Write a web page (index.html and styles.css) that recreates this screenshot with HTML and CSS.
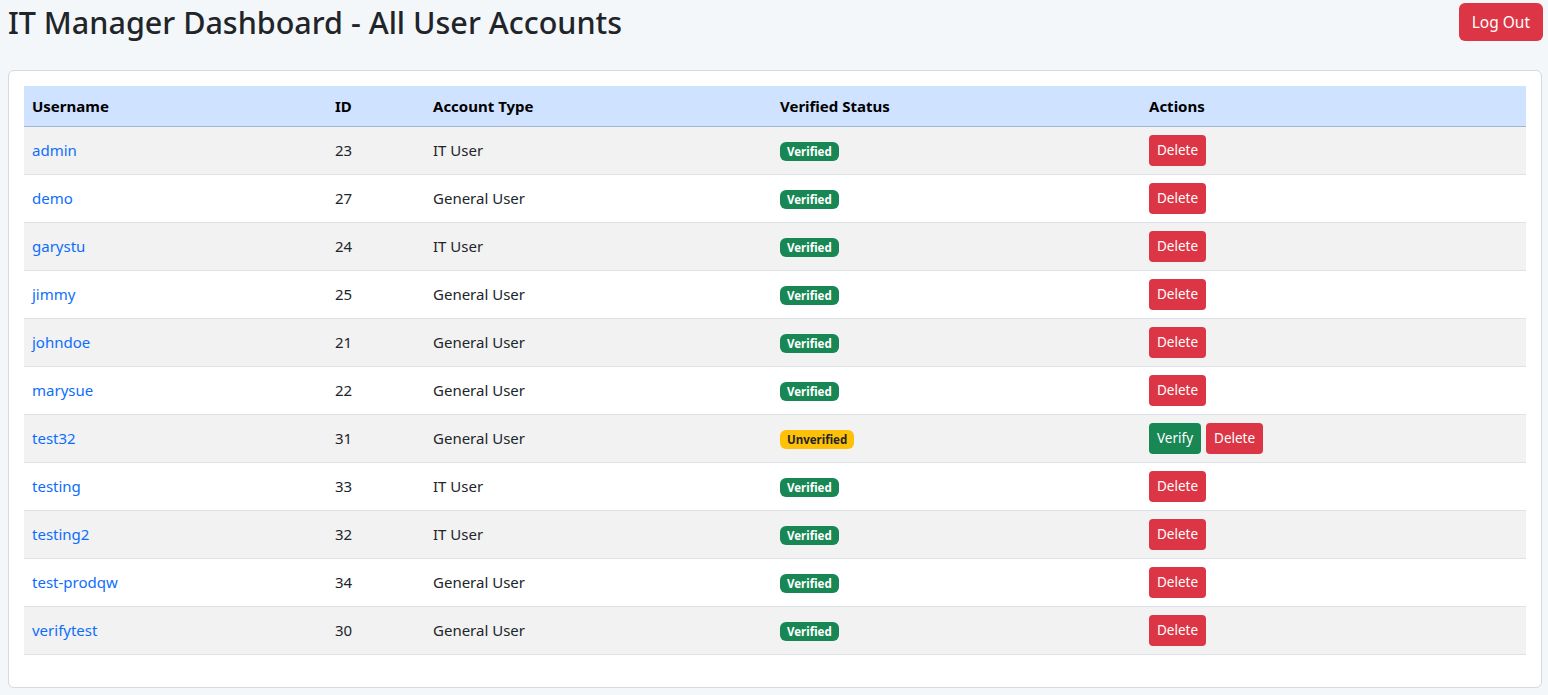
FILE: index.html
```html
<!DOCTYPE html>
<html lang="en">
<head>
<meta charset="utf-8">
<title>IT Manager Dashboard</title>
<link rel="stylesheet" href="styles.css">
</head>
<body>
<header class="topbar">
  <h1 class="title">IT Manager Dashboard - All User Accounts</h1>
  <button class="btn btn-danger btn-md">Log Out</button>
</header>
<main class="card">
  <table class="users">
    <colgroup>
      <col class="c1"><col class="c2"><col class="c3"><col class="c4"><col class="c5">
    </colgroup>
    <thead>
      <tr><th>Username</th><th>ID</th><th>Account Type</th><th>Verified Status</th><th>Actions</th></tr>
    </thead>
    <tbody>
      <tr><td><a href="#">admin</a></td><td>23</td><td>IT User</td><td><span class="badge ok">Verified</span></td><td><button class="btn btn-danger btn-sm">Delete</button></td></tr>
      <tr><td><a href="#">demo</a></td><td>27</td><td>General User</td><td><span class="badge ok">Verified</span></td><td><button class="btn btn-danger btn-sm">Delete</button></td></tr>
      <tr><td><a href="#">garystu</a></td><td>24</td><td>IT User</td><td><span class="badge ok">Verified</span></td><td><button class="btn btn-danger btn-sm">Delete</button></td></tr>
      <tr><td><a href="#">jimmy</a></td><td>25</td><td>General User</td><td><span class="badge ok">Verified</span></td><td><button class="btn btn-danger btn-sm">Delete</button></td></tr>
      <tr><td><a href="#">johndoe</a></td><td>21</td><td>General User</td><td><span class="badge ok">Verified</span></td><td><button class="btn btn-danger btn-sm">Delete</button></td></tr>
      <tr><td><a href="#">marysue</a></td><td>22</td><td>General User</td><td><span class="badge ok">Verified</span></td><td><button class="btn btn-danger btn-sm">Delete</button></td></tr>
      <tr><td><a href="#">test32</a></td><td>31</td><td>General User</td><td><span class="badge warn">Unverified</span></td><td><div class="actions"><button class="btn btn-success btn-sm">Verify</button><button class="btn btn-danger btn-sm">Delete</button></div></td></tr>
      <tr><td><a href="#">testing</a></td><td>33</td><td>IT User</td><td><span class="badge ok">Verified</span></td><td><button class="btn btn-danger btn-sm">Delete</button></td></tr>
      <tr><td><a href="#">testing2</a></td><td>32</td><td>IT User</td><td><span class="badge ok">Verified</span></td><td><button class="btn btn-danger btn-sm">Delete</button></td></tr>
      <tr><td><a href="#">test-prodqw</a></td><td>34</td><td>General User</td><td><span class="badge ok">Verified</span></td><td><button class="btn btn-danger btn-sm">Delete</button></td></tr>
      <tr><td><a href="#">verifytest</a></td><td>30</td><td>General User</td><td><span class="badge ok">Verified</span></td><td><button class="btn btn-danger btn-sm">Delete</button></td></tr>
    </tbody>
  </table>
</main>
</body>
</html>
```
FILE: styles.css
```css
* { box-sizing: border-box; }
html, body { margin: 0; padding: 0; }
body {
  background: #f4f7fa;
  color: #212529;
  font-family: "Noto Sans", "Open Sans", "Liberation Sans", sans-serif;
  font-size: 16px;
  line-height: 1.5;
}
.topbar {
  display: flex;
  justify-content: space-between;
  align-items: center;
  padding: 3px 5px 0 8px;
}
.title {
  margin: 0;
  font-size: 30.5px;
  font-weight: 500;
  line-height: 38px;
}
.btn {
  display: inline-flex;
  align-items: center;
  justify-content: center;
  border: 0;
  border-radius: 6px;
  color: #fff;
  font-family: inherit;
  cursor: pointer;
}
.btn-md {
  height: 38px;
  padding: 0 13px;
  font-size: 15.5px;
}
.btn-danger { background: #dc3545; }
.btn-success { background: #198754; }
.btn-sm {
  height: 31px;
  padding: 0 8px;
  font-size: 13.5px;
  border-radius: 4px;
}
.card {
  margin: 29px 6px 7px 8px;
  background: #fff;
  border: 1px solid #d6d9dd;
  border-radius: 6px;
  padding: 15px 15px 32px 15px;
}
.users {
  width: 100%;
  border-collapse: collapse;
  table-layout: fixed;
}
.c1 { width: 303px; }
.c2 { width: 98px; }
.c3 { width: 347px; }
.c4 { width: 369px; }
.c5 { width: auto; }
.users th {
  background: #cfe2ff;
  text-align: left;
  font-size: 15px;
  font-weight: 700;
  height: 40px;
  padding: 0 8px;
  border-bottom: 1px solid #a6b5cc;
  color: #000;
}
.users td {
  height: 48px;
  padding: 0 8px;
  border-bottom: 1px solid #dee2e6;
  font-size: 15px;
  vertical-align: middle;
}
.users tbody tr:nth-child(odd) td { background: #f2f2f2; }
.users a { color: #0d6efd; text-decoration: none; }
.badge {
  display: inline-block;
  font-size: 11.5px;
  font-weight: 700;
  line-height: 1;
  padding: 4px 7px;
  border-radius: 6px;
}
.badge.ok { background: #198754; color: #fff; }
.badge.warn { background: #ffc107; color: #212529; }
.actions { display: flex; gap: 5px; }
```
